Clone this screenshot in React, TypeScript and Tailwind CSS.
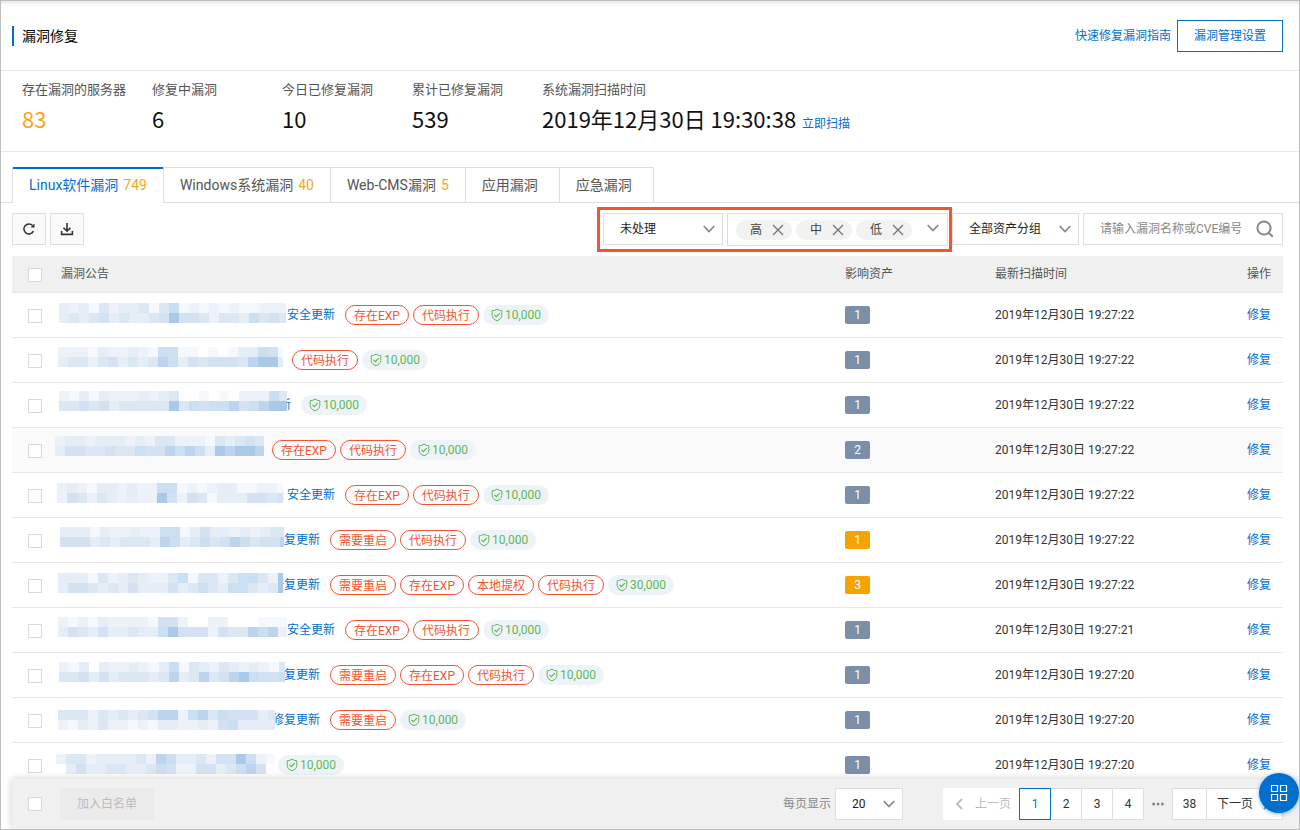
// 漏洞修复页 — 漏洞统计、筛选、漏洞公告列表与分页

import { useState } from 'react';

type Vul = {
  id: number;
  // 打码区域: 起点、右边界、行高偏移、两行色块
  mask: { x: number; y: number; end: number; rows: [string, string] };
  maskWidth: number;
  title?: string;
  shift?: string;
  tags: string[];
  score: string;
  assets: number;
  urgent?: boolean;
  time: string;
  hover?: boolean;
};

const SHADES = ['#ffffff', '#f5f9fd', '#edf2fa', '#e5edf7', '#dce7f4', '#d3e1f2', '#cbdff2', '#bcd4ed', '#aac9e9'];

const vuls: Vul[] = [
  { id: 1, mask: { x: 4, y: 10, end: 231, rows: ['32314233414612121211222', '34345343345855424436454'] }, maskWidth: 232, title: '安全更新', tags: ['存在EXP', '代码执行'], score: '10,000', assets: 1, time: '2019年12月30日 19:27:22' },
  { id: 2, mask: { x: 3, y: 9, end: 228, rows: ['22213223216611010133651', '34424534347635455547883'] }, maskWidth: 227, tags: ['代码执行'], score: '10,000', assets: 1, time: '2019年12月30日 19:27:22' },
  { id: 3, mask: { x: 4, y: 8, end: 232, rows: ['21313222323400101022264', '44545344444846566756788'] }, maskWidth: 232, title: '新', shift: '-ml-2', tags: [], score: '10,000', assets: 1, time: '2019年12月30日 19:27:22' },
  { id: 4, mask: { x: 0, y: 8, end: 209, rows: ['233233323244222143454', '355445446557676387887'] }, maskWidth: 207, tags: ['存在EXP', '代码执行'], score: '10,000', assets: 2, time: '2019年12月30日 19:27:22', hover: true },
  { id: 5, mask: { x: 2, y: 10, end: 228, rows: ['23213323226612123311221', '25424323228525413335545'] }, maskWidth: 226, title: ': 安全更新', tags: ['存在EXP', '代码执行'], score: '10,000', assets: 1, time: '2019年12月30日 19:27:22' },
  { id: 6, mask: { x: 5, y: 9, end: 229, rows: ['33313223226613533232344', '55534344437634645764557'] }, maskWidth: 229, title: '复更新', tags: ['需要重启', '代码执行'], score: '10,000', assets: 1, urgent: true, time: '2019年12月30日 19:27:22' },
  { id: 7, mask: { x: 3, y: 10, end: 228, rows: ['33314234322461442466428', '35543435333534643664348'] }, maskWidth: 227, title: '修复更新', shift: '-ml-2.5', tags: ['需要重启', '存在EXP', '本地提权', '代码执行'], score: '30,000', assets: 3, urgent: true, time: '2019年12月30日 19:27:22' },
  { id: 8, mask: { x: 3, y: 9, end: 232, rows: ['21213222215520022000111', '35435334336855525447672'] }, maskWidth: 232, title: '安全更新', tags: ['存在EXP', '代码执行'], score: '10,000', assets: 1, time: '2019年12月30日 19:27:21' },
  { id: 9, mask: { x: 4, y: 9, end: 230, rows: ['21303223213614324323214', '44535344434734745786556'] }, maskWidth: 229, title: '复更新', tags: ['需要重启', '存在EXP', '代码执行'], score: '10,000', assets: 1, time: '2019年12月30日 19:27:20' },
  { id: 10, mask: { x: 3, y: 12, end: 220, rows: ['4442434345772674655534', '2132422121332232563333'] }, maskWidth: 219, title: '修复更新', shift: '-ml-0.5', tags: ['需要重启'], score: '10,000', assets: 1, time: '2019年12月30日 19:27:20' },
  { id: 11, mask: { x: 1, y: 11, end: 219, rows: ['2442333342763342558621', '0353344334652255346750'] }, maskWidth: 213, tags: [], score: '10,000', assets: 1, time: '2019年12月30日 19:27:20' },
];

const stats = [
  { label: '存在漏洞的服务器', value: '83', warn: true },
  { label: '修复中漏洞', value: '6' },
  { label: '今日已修复漏洞', value: '10' },
  { label: '累计已修复漏洞', value: '539' },
];

const tabs = [
  { name: 'Linux软件漏洞', count: '749' },
  { name: 'Windows系统漏洞', count: '40' },
  { name: 'Web-CMS漏洞', count: '5' },
  { name: '应用漏洞', count: '' },
  { name: '应急漏洞', count: '' },
];

function Chevron({ className = '' }: { className?: string }) {
  return (
    <svg viewBox="0 0 12 8" className={`pointer-events-none h-2 w-3 fill-none stroke-[#888] ${className}`} strokeWidth="1.7">
      <path d="M0.7 1 6 6.5 11.3 1" />
    </svg>
  );
}

function Mask({ mask, width }: { mask: Vul['mask']; width: number }) {
  return (
    <svg width={width} height="44" className="relative z-10 shrink-0 overflow-visible" shapeRendering="crispEdges" aria-hidden="true">
      {mask.rows.map((row, r) =>
        row.split('').map((c, i) => {
          const x = mask.x + i * 10;
          return <rect key={`${r}-${i}`} x={x} y={mask.y + r * 10} width={Math.max(0, Math.min(10, mask.end - x))} height="10" fill={SHADES[Number(c)]} />;
        })
      )}
    </svg>
  );
}

function Check({ label }: { label: string }) {
  return (
    <input
      type="checkbox"
      aria-label={label}
      className="block size-3.5 appearance-none border border-[#d9d9d9] bg-white checked:border-[#0070cc] checked:bg-[#0070cc]"
    />
  );
}

function Select({ label, options, className }: { label: string; options: string[]; className: string }) {
  return (
    <div className={`relative h-8 ${className}`}>
      <select aria-label={label} className="h-full w-full appearance-none rounded-none border border-[#dedede] bg-white pl-4 text-xs text-[#222] outline-none">
        {options.map((o) => <option key={o}>{o}</option>)}
      </select>
      <Chevron className="absolute top-3 right-2" />
    </div>
  );
}

export default function App() {
  const [tab, setTab] = useState(0);
  const [levels, setLevels] = useState(['高', '中', '低']);
  const [page, setPage] = useState(1);

  return (
    <div className="relative flex h-screen flex-col overflow-hidden border border-[#bfbfbf] bg-white font-[Roboto,'Noto_Sans_CJK_SC',sans-serif] text-xs text-[#333]">
      <header className="flex h-[70px] shrink-0 items-center justify-between border-b border-[#e8e8e8] pr-4 pl-[11px] shadow-[inset_0_5px_5px_-4px_rgba(0,0,0,0.15)]">
        <h1 className="border-l-2 border-[#0070cc] pl-2 text-sm text-black">漏洞修复</h1>
        <div className="flex items-center gap-1.5">
          <a href="#guide" className="text-[#0070cc]">快速修复漏洞指南</a>
          <button className="h-8 border border-[#0070cc] px-4 text-[#0070cc]">漏洞管理设置</button>
        </div>
      </header>

      <section className="flex h-[81px] shrink-0 border-b border-[#e8e8e8] pt-2 pl-[21px] font-['Noto_Sans_CJK_SC',sans-serif]">
        {stats.map((s) => (
          <div key={s.label} className="w-[130px]">
            <p className="text-[13px] leading-5 text-[#555]">{s.label}</p>
            <p className={`mt-[3px] text-[22px] leading-8 ${s.warn ? 'text-[#f5a623]' : 'text-[#111]'}`}>{s.value}</p>
          </div>
        ))}
        <div>
          <p className="text-[13px] leading-5 text-[#555]">系统漏洞扫描时间</p>
          <div className="mt-[3px] flex items-baseline gap-1.5">
            <p className="text-[22px] leading-8 text-[#111]">2019年12月30日 19:30:38</p>
            <a href="#scan" className="text-[#0070cc]">立即扫描</a>
          </div>
        </div>
      </section>

      <main className="flex min-h-0 flex-1 flex-col overflow-hidden">
        <nav className="mt-[15px] flex h-9 shrink-0 border-b border-[#dedede] pl-[11px] text-sm">
          {tabs.map((t, i) => (
            <button
              key={t.name}
              onClick={() => setTab(i)}
              className={`flex h-9 items-center gap-[5px] border-r px-4 ${i === 0 ? 'border-l' : ''} ${
                i === tab
                  ? 'border-x-[#dedede] bg-white text-[#0070cc] shadow-[inset_0_2px_0_#0070cc]'
                  : 'border-t border-b border-[#dedede] text-[#555]'
              }`}
            >
              {t.name}
              <span className="text-[#f5a623]">{t.count}</span>
            </button>
          ))}
        </nav>

        <div className="mt-2.5 flex h-8 shrink-0 items-start justify-between pr-4 pl-[11px]">
          <div className="flex gap-1">
            <button aria-label="刷新" className="flex h-8 w-[34px] items-center justify-center border border-[#dedede] bg-[#fafafa]">
              <svg viewBox="0 0 12 12" className="size-3 fill-none stroke-[#333]" strokeWidth="1.5">
                <path d="M10.4 8.2A5 5 0 1 1 9.6 2.6" />
                <path d="M11.5 0.6V4.6H7.5Z" className="fill-[#333] stroke-none" />
              </svg>
            </button>
            <button aria-label="下载" className="flex h-8 w-[34px] items-center justify-center border border-[#dedede] bg-[#fafafa]">
              <svg viewBox="0 0 14 14" className="size-3.5 fill-none stroke-[#333]" strokeWidth="1.6">
                <path d="M7 1V9M3.5 5.7 7 9.2 10.5 5.7M1.6 9V12.4H12.4V9" />
              </svg>
            </button>
          </div>

          <div className="flex items-start gap-1">
            <div className="relative flex items-start gap-1">
              <Select label="状态" options={['未处理', '已处理']} className="w-[120px]" />
              <div className="flex h-[33px] w-[221px] items-center gap-1 border border-[#dedede] bg-white pr-2 pl-2">
                {levels.map((l) => (
                  <span key={l} className="flex h-5 w-14 items-center justify-between rounded-full bg-[#f2f2f2] pr-2 pl-3.5 text-[#444]">
                    {l}
                    <button aria-label={`移除${l}`} onClick={() => setLevels(levels.filter((v) => v !== l))}>
                      <svg viewBox="0 0 12 12" className="size-3 fill-none stroke-[#777]" strokeWidth="1.4">
                        <path d="M1 1 11 11M11 1 1 11" />
                      </svg>
                    </button>
                  </span>
                ))}
                <Chevron className="mb-1 ml-auto" />
              </div>
              {/* 筛选区高亮框 */}
              <div className="pointer-events-none absolute -inset-x-1 -inset-y-1.5 z-10 -ml-0.5 border-3 border-[#f25533]" />
            </div>
            <Select label="资产分组" options={['全部资产分组']} className="w-[127px]" />
            <div className="flex h-8 w-[200px] items-center justify-between border border-[#dedede] pr-2 pl-4">
              <input aria-label="搜索" placeholder="请输入漏洞名称或CVE编号进行搜索" className="w-[142px] text-xs outline-none placeholder:text-[#888]" />
              <button aria-label="搜索漏洞">
                <svg viewBox="0 0 18 18" className="size-[18px] fill-none stroke-[#888]" strokeWidth="2">
                  <circle cx="8" cy="8" r="6.6" />
                  <path d="M12.6 12.6 16.8 16.8" />
                </svg>
              </button>
            </div>
          </div>
        </div>

        <div className="mt-[11px] pr-4 pl-[11px]">
          <table className="w-full table-fixed border-separate border-spacing-0 text-left">
            <thead className="bg-[#f0f0f0] text-[#555]">
              <tr className="*:h-[37px] *:border-b *:border-[#e8e8e8] *:p-0 *:font-normal">
                <th className="w-[43px]"><div className="pt-0.5 pl-4"><Check label="全选" /></div></th>
                <th><span className="pl-1.5">漏洞公告</span></th>
                <th className="w-[150px]">影响资产</th>
                <th className="w-[252px]">最新扫描时间</th>
                <th className="w-[36px]">操作</th>
              </tr>
            </thead>
            <tbody>
              {vuls.map((v) => (
                <tr key={v.id} className={`*:border-b *:border-[#e8e8e8] *:p-0 ${v.hover ? 'bg-[#fafafa]' : ''}`}>
                  <td><div className="pt-0.5 pl-4"><Check label={`选择第${v.id}条`} /></div></td>
                  <td>
                    <div className="flex h-11 items-center">
                      <a href={`#vul-${v.id}`} className="flex items-center whitespace-pre text-[#0070cc]">
                        <Mask mask={v.mask} width={v.maskWidth} />
                        {v.title && <span className={v.shift}>{v.title}</span>}
                      </a>
                      <div className="ml-2.5 flex gap-1">
                        {v.tags.map((t) => (
                          <span key={t} className="flex h-5 items-center rounded-full border border-[#f25533] px-2 pt-0.5 text-[#f25533]">{t}</span>
                        ))}
                        <span className="flex h-5 items-center gap-0.5 rounded-full bg-[#edf3f8] px-2 text-[#5fb950]">
                          <svg viewBox="0 0 12 14" className="h-3.5 w-3 fill-none stroke-[#5fb950]">
                            <path d="M6 1.2C4.6 2.2 2.8 2.7 1.2 2.7V7.5C1.2 10 3.2 11.8 6 12.8 8.8 11.8 10.8 10 10.8 7.5V2.7C9.2 2.7 7.4 2.2 6 1.2Z" />
                            <path d="M3.4 6.9 5.3 8.7 8.8 5.2" strokeWidth="1.2" />
                          </svg>
                          {v.score}
                        </span>
                      </div>
                    </div>
                  </td>
                  <td>
                    <span className={`flex h-[18px] w-[25px] items-center justify-center rounded-xs text-white ${v.urgent ? 'bg-[#f5a300]' : 'bg-[#7c8fa8]'}`}>{v.assets}</span>
                  </td>
                  <td>{v.time}</td>
                  <td><a href={`#fix-${v.id}`} className="text-[#0070cc]">修复</a></td>
                </tr>
              ))}
            </tbody>
          </table>
        </div>
      </main>

      <footer className="relative z-20 ml-[11px] flex h-[50px] shrink-0 items-center bg-[#f0f0f0] pr-4 pl-4 shadow-[0_0_8px_rgba(0,0,0,0.2)]">
        <Check label="全选本页" />
        <button disabled className="ml-[18px] h-8 bg-[#ebebeb] px-[17px] text-[#bbb]">加入白名单</button>
        <div className="ml-auto flex items-center">
          <span className="mr-1 text-[#888]">每页显示</span>
          <Select label="每页显示" options={['20', '50', '100']} className="mr-10 w-[68px]" />
          <button disabled className="flex h-8 w-[76px] items-center justify-between bg-white pr-2 pl-3 text-[#bbb]">
            <svg viewBox="0 0 8 12" className="h-3 w-2 fill-none stroke-[#bbb]" strokeWidth="1.8"><path d="M7 1 2 6 7 11" /></svg>
            上一页
          </button>
          {[1, 2, 3, 4].map((n) => (
            <button
              key={n}
              onClick={() => setPage(n)}
              className={`h-8 border bg-white ${n === page ? 'w-8 border-[#0070cc] text-[#0070cc]' : 'w-[31px] border-l-0 border-[#dedede]'}`}
            >
              {n}
            </button>
          ))}
          <svg viewBox="0 0 12 4" className="mx-2 h-1 w-3 fill-[#888]">
            <circle cx="1.6" cy="2" r="1.5" />
            <circle cx="6" cy="2" r="1.5" />
            <circle cx="10.4" cy="2" r="1.5" />
          </svg>
          <button className="h-8 w-[34px] border border-r-0 border-[#dedede] bg-white">38</button>
          <button className="flex h-8 w-[77px] items-center gap-2.5 border border-[#dedede] bg-white pl-2.5">
            下一页
            <svg viewBox="0 0 8 12" className="h-3 w-2 fill-none stroke-[#888]" strokeWidth="1.8"><path d="M1 1 6 6 1 11" /></svg>
          </button>
        </div>
      </footer>

      <button aria-label="快捷入口" className="absolute right-0 bottom-4 z-30 flex size-10 items-center justify-center rounded-full bg-[#0070cc] shadow-[0_1px_4px_rgba(0,112,204,0.5)]">
        <svg viewBox="0 0 18 18" className="size-[18px] fill-none stroke-white" strokeWidth="1.2">
          <path d="M1.5 1.5H7.5V7.5H1.5ZM10.5 1.5H16.5V7.5H10.5ZM1.5 10.5H7.5V16.5H1.5ZM10.5 10.5H16.5V16.5H10.5Z" />
        </svg>
      </button>
    </div>
  );
}
